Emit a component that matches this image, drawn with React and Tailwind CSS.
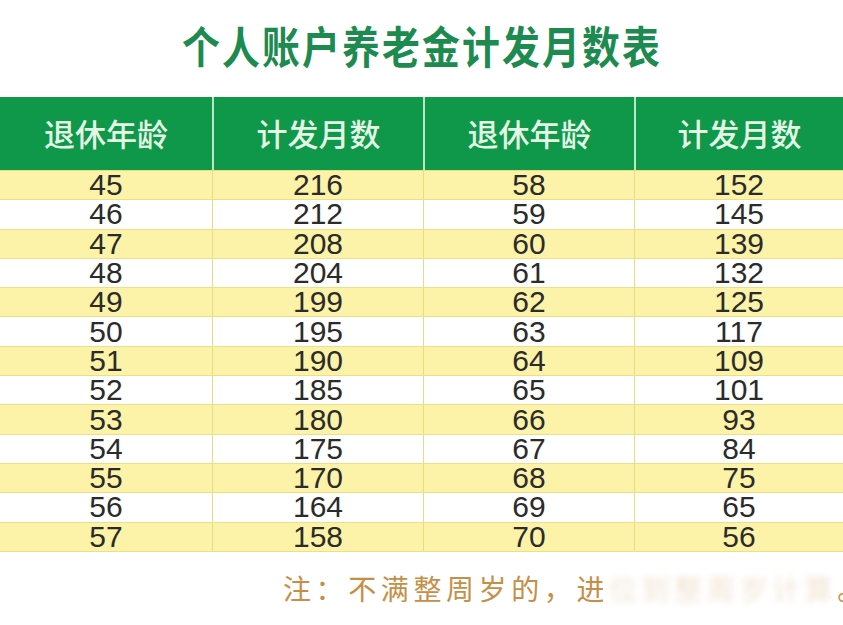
import React from "react";

const rows = [
  [45, 216, 58, 152],
  [46, 212, 59, 145],
  [47, 208, 60, 139],
  [48, 204, 61, 132],
  [49, 199, 62, 125],
  [50, 195, 63, 117],
  [51, 190, 64, 109],
  [52, 185, 65, 101],
  [53, 180, 66, 93],
  [54, 175, 67, 84],
  [55, 170, 68, 75],
  [56, 164, 69, 65],
  [57, 158, 70, 56],
];

const headers = ["退休年龄", "计发月数", "退休年龄", "计发月数"];

export default function App() {
  return (
    <div
      className="relative w-[843px] h-[625px] overflow-hidden bg-white"
      style={{ fontFamily: '"Noto Sans CJK SC", "Noto Sans", sans-serif' }}
    >
      {/* Title */}
      <div className="h-[97px] flex items-center justify-center pb-[8px]">
        <h1 className="text-[44px] leading-none font-bold text-[#1d8a50] tracking-[2.5px] scale-x-[0.86] [text-shadow:0_0_3px_rgba(255,255,255,0.9)]">
          个人账户养老金计发月数表
        </h1>
      </div>

      {/* Header */}
      <div className="grid grid-cols-[212px_211px_211px_1fr] h-[73px] bg-[#0f974a]">
        {headers.map((h, i) => (
          <div
            key={i}
            className={`flex items-center justify-center text-[31px] font-medium text-[#e4f7e6] ${
              i > 0 ? "border-l-2 border-[#b9e8c4]" : ""
            }`}
          >
            {h}
          </div>
        ))}
      </div>

      {/* Body */}
      <div className="border-t border-[#e9de84]">
        {rows.map((r, idx) => (
          <div
            key={idx}
            className={`grid grid-cols-[212px_211px_211px_1fr] h-[29.3px] border-b border-[#ebe089] ${
              idx % 2 === 0 ? "bg-[#fcf3a8]" : "bg-white"
            }`}
          >
            {r.map((v, i) => (
              <div
                key={i}
                className={`flex items-center justify-center text-[30px] leading-[28px] text-[#2b2b2b] ${
                  i > 0 ? "border-l border-[#e6dc82]" : ""
                }`}
                style={{ fontFamily: '"Liberation Sans", Arial, sans-serif' }}
              >
                {v}
              </div>
            ))}
          </div>
        ))}
      </div>

      {/* Note */}
      <div className="relative pt-[22px] pl-[283px] whitespace-nowrap">
        <p className="text-[28px] leading-none tracking-[4.6px] text-[#c68f47]">
          注：不满整周岁的，进位到整周岁计算。
        </p>
        {/* watermark */}
        <div className="absolute left-[603px] top-[14px] w-[230px] h-[42px] bg-white/75 backdrop-blur-[3px] rounded-sm" />
      </div>
    </div>
  );
}
